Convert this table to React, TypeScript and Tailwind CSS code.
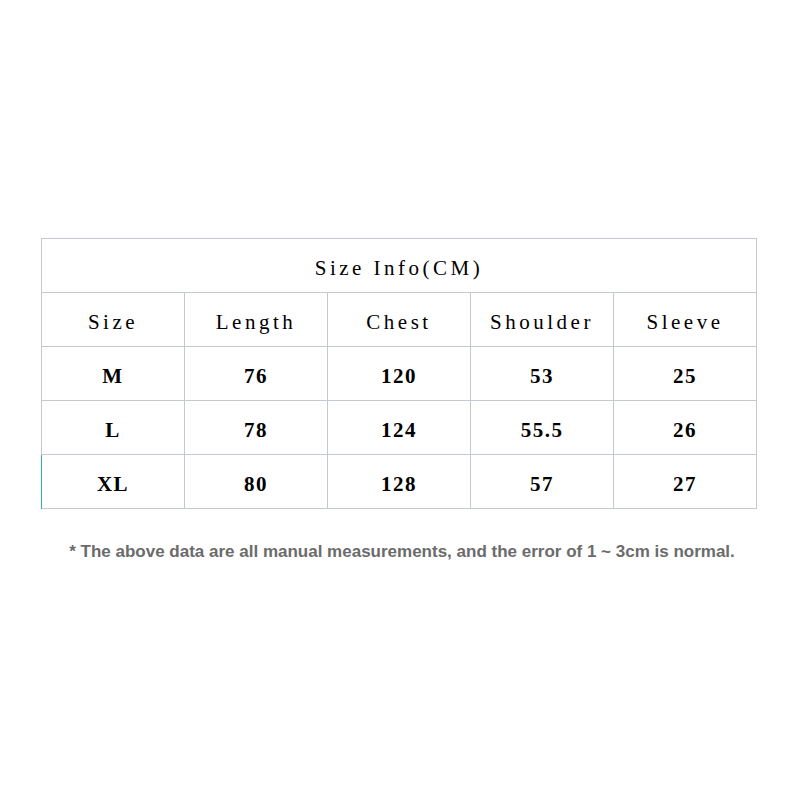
const HEAD = ['Size', 'Length', 'Chest', 'Shoulder', 'Sleeve'];

const ROWS = [
  ['M', '76', '120', '53', '25'],
  ['L', '78', '124', '55.5', '26'],
  ['XL', '80', '128', '57', '27'],
];

const cell =
  'h-[54px] pt-[6px] flex items-center justify-center border-r border-b border-[#c3c8d3] text-[21px] text-black';

export default function App() {
  return (
    <div className="w-[800px] h-[800px] bg-white overflow-hidden font-['Liberation_Serif',serif]">
      <div className="ml-[41px] mt-[238px] w-[716px] border-t border-l border-[#c3c8d3]">
        <div className="h-[54px] pt-[6px] flex items-center justify-center border-r border-b border-[#c3c8d3] text-[21px] tracking-[3.5px] text-black">
          Size Info(CM)
        </div>
        <div className="grid grid-cols-5">
          {HEAD.map((h) => (
            <div key={h} className={`${cell} tracking-[3.5px]`}>
              {h}
            </div>
          ))}
        </div>
        {ROWS.map((r, i) => (
          <div
            key={r[0]}
            className={`grid grid-cols-5 ${i === ROWS.length - 1 ? 'border-l border-l-[#2fb39b] -ml-px' : ''}`}
          >
            {r.map((v, j) => (
              <div key={j} className={`${cell} font-bold tracking-[1.5px]`}>
                {v}
              </div>
            ))}
          </div>
        ))}
      </div>
      <p className="mt-[30px] text-center pl-[4px] font-['Liberation_Sans',sans-serif] font-bold text-[17px] text-[#6b6b6b]">
        * The above data are all manual measurements, and the error of 1 ~ 3cm is normal.
      </p>
    </div>
  );
}
